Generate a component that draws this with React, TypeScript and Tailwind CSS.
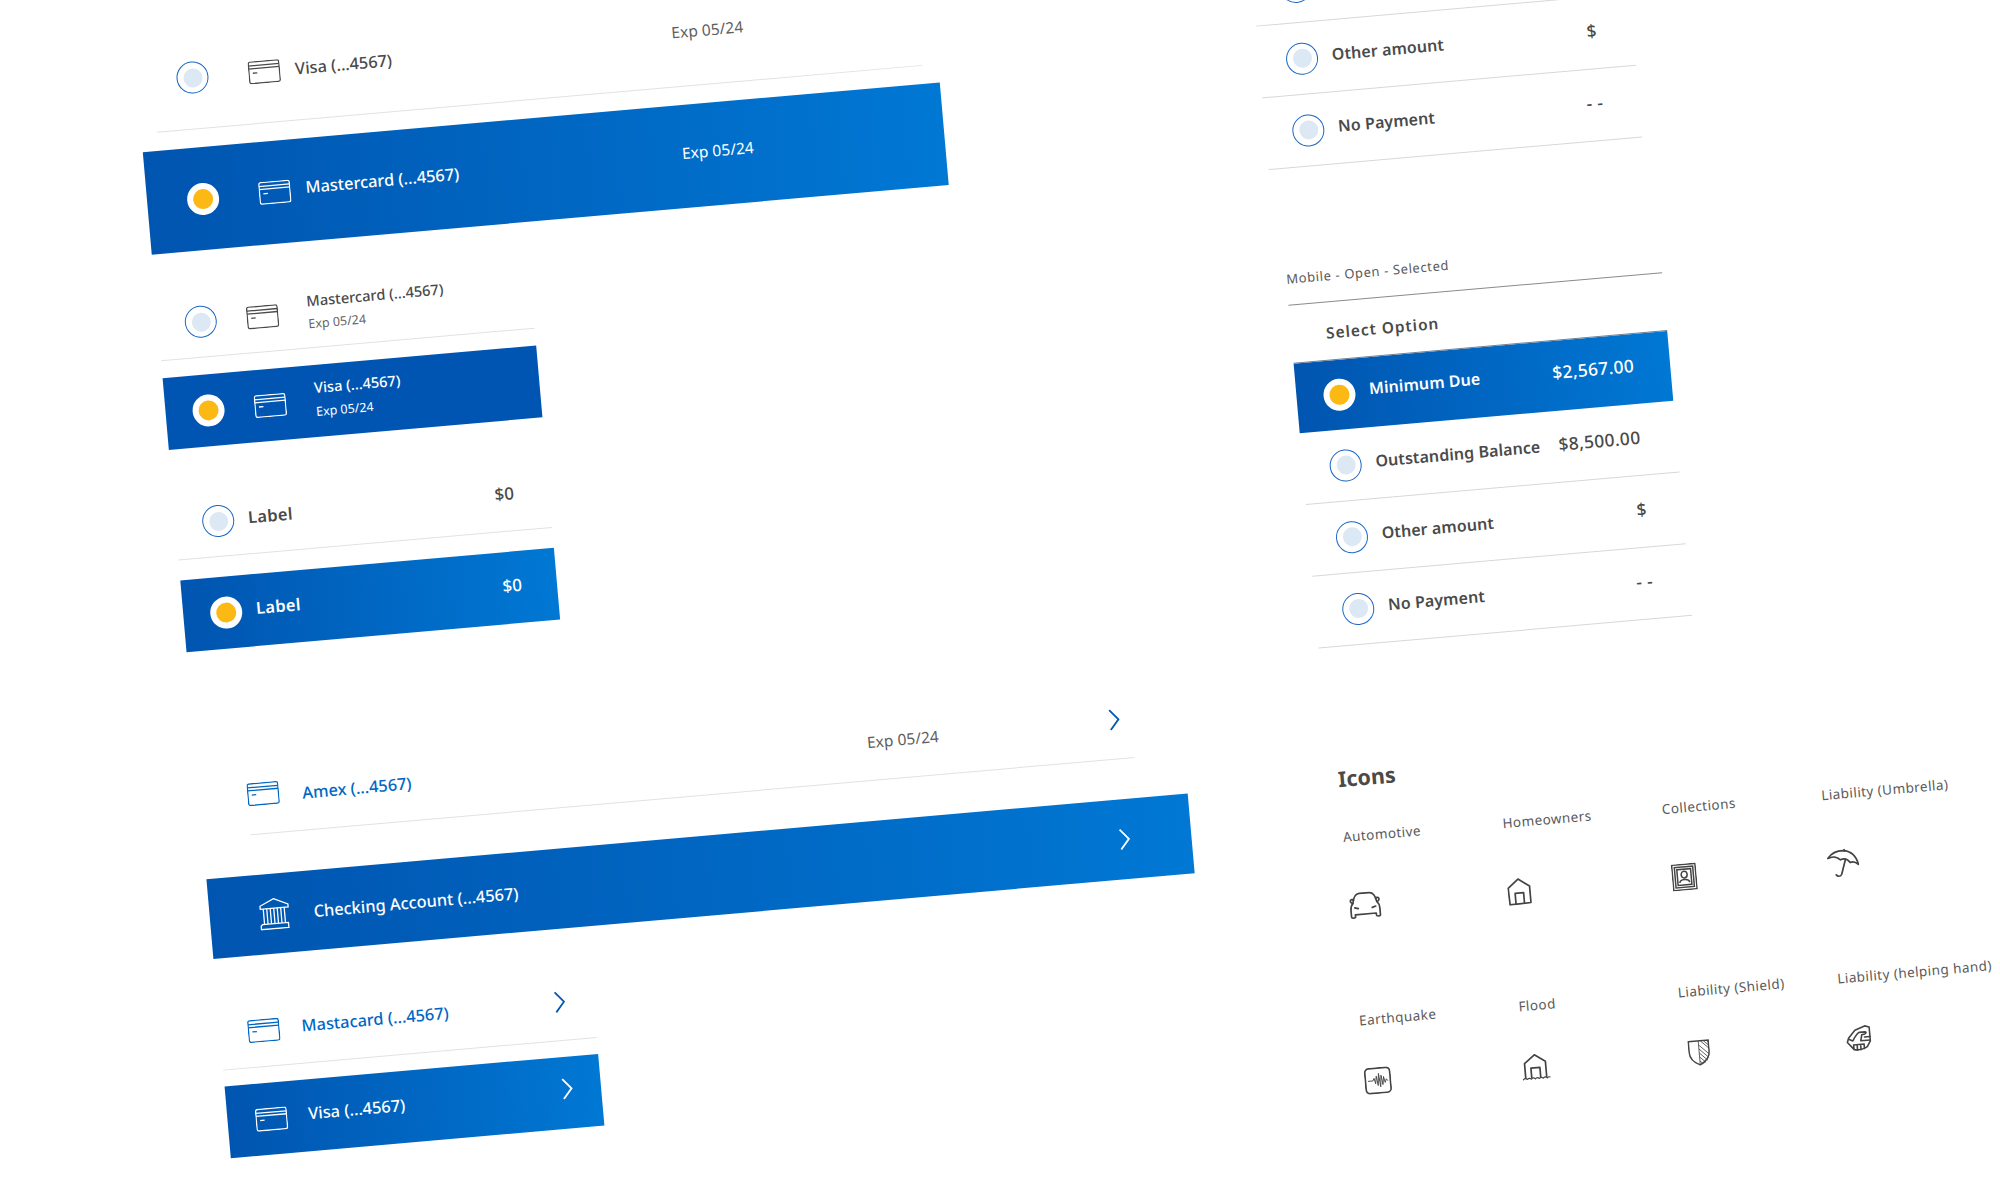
import React from "react";

const Card = ({ c = "#4a4a4a" }: { c?: string }) => (
  <svg width="32" height="23" viewBox="0 0 32 23" fill="none" stroke={c} strokeWidth="1.3" className="shrink-0">
    <rect x="0.7" y="0.7" width="30.6" height="21.6" rx="2" />
    <path d="M0.7 4.5H31.3M0.7 7.5H31.3M4.5 12H9" />
  </svg>
);

const Bank = () => (
  <svg width="34" height="32" viewBox="0 0 34 32" fill="none" stroke="#fff" strokeWidth="1.3" className="shrink-0">
    <path d="M17 1L31 7.5V10.5H3V7.5Z" />
    <path d="M6 10.5V26M9.5 10.5V26M13 10.5V26M16.5 10.5V26M20 10.5V26M23.5 10.5V26M27 10.5V26" />
    <path d="M4 26H30V31H2.5V27.5Z" />
  </svg>
);

const Chevron = ({ c, className = "" }: { c: string; className?: string }) => (
  <svg width="11" height="22" viewBox="0 0 11 22" fill="none" stroke={c} strokeWidth="1.8" className={"shrink-0 " + className}>
    <path d="M1 1L9.5 11L1 21" />
  </svg>
);

const Radio = ({ on }: { on?: boolean }) =>
  on ? (
    <span className="flex h-8 w-8 shrink-0 items-center justify-center rounded-full bg-white">
      <span className="h-5 w-5 rounded-full bg-[#fdb913]" />
    </span>
  ) : (
    <span className="flex h-8 w-8 shrink-0 items-center justify-center rounded-full border border-[#1a66c4]">
      <span className="h-[19px] w-[19px] rounded-full bg-[#dde8f5]" />
    </span>
  );

const grad = "bg-linear-to-r from-[#0055b0] to-[#0078d4]";

const OptionRow = ({ label, value, valueClass = "" }: { label: string; value: string; valueClass?: string }) => (
  <div className="flex h-[72px] w-[375px] items-center border-b border-[#d8d8d8] pr-[36px] pl-[27px] text-[#4a4a4a]">
    <Radio />
    <span className="ml-[14px] -translate-y-[2px] text-[16px] font-semibold tracking-[0.1px]">{label}</span>
    <span className={"ml-auto -translate-y-[2px] text-[17.5px] font-medium tracking-[0.3px] " + valueClass}>{value}</span>
  </div>
);

const IconCell = ({ label, gap, children }: { label: string; gap: string; children: React.ReactNode }) => (
  <div className="flex flex-col items-start">
    <span className="whitespace-nowrap text-[13.5px] leading-6 tracking-[0.45px] text-[#5a5a5a]">{label}</span>
    <div className={"flex h-8 w-8 items-center justify-center " + gap}>{children}</div>
  </div>
);

const ico = { fill: "none", stroke: "#444", strokeWidth: 1.7, strokeLinejoin: "round" as const, strokeLinecap: "round" as const };

export default function App() {
  return (
    <div className="relative h-[1200px] w-[2000px] overflow-hidden bg-white font-['Noto_Sans','Open_Sans',sans-serif]">
      <div className="flex w-[2400px] origin-top-left rotate-[-5deg] pl-[129px]">
        {/* left column */}
        <div className="flex w-[1120px] shrink-0 flex-col items-start pt-[43px]">
          <div className="ml-4 flex h-[103px] w-[768px] items-center border-b border-[#e2e2e2] pr-[175px] pl-[24px] text-[#4a4a4a]">
            <Radio />
            <span className="ml-[40px]"><Card /></span>
            <span className="ml-[15px] text-[16.4px] font-medium">Visa (...4567)</span>
            <span className="ml-auto -translate-y-[2px] text-[15.6px] text-[#5f5f5f]">Exp 05/24</span>
          </div>
          <div className={"mt-[18px] flex h-[103px] w-[800px] items-center pr-[191px] pl-[40px] text-white " + grad}>
            <Radio on />
            <span className="ml-[40px]"><Card c="#fff" /></span>
            <span className="ml-[15px] -translate-y-[2px] text-[16.4px] font-medium">Mastercard (...4567)</span>
            <span className="ml-auto -translate-y-[3px] text-[15.6px]">Exp 05/24</span>
          </div>

          <div className="mt-[36px] flex h-[71px] w-[375px] items-center border-b border-[#e2e2e2] pl-[27px] text-[#4a4a4a]">
            <Radio />
            <span className="ml-[30px]"><Card /></span>
            <div className="ml-[29px] flex flex-col">
              <span className="-translate-y-[2px] text-[14.6px] leading-5 font-medium">Mastercard (...4567)</span>
              <span className="mt-1 text-[12.5px] leading-4 text-[#666]">Exp 05/24</span>
            </div>
          </div>
          <div className="mt-[17px] flex h-[72px] w-[375px] items-center bg-[#0055b3] pl-[27px] text-white">
            <Radio on />
            <span className="ml-[30px]"><Card c="#fff" /></span>
            <div className="ml-[29px] flex -translate-y-px flex-col">
              <span className="-translate-y-[3px] text-[14.6px] leading-5 font-medium">Visa (...4567)</span>
              <span className="mt-1 text-[12.5px] leading-4">Exp 05/24</span>
            </div>
          </div>

          <div className="mt-[40px] flex h-[71px] w-[375px] items-center border-b border-[#e2e2e2] pr-[35px] pl-[27px] text-[#4a4a4a]">
            <Radio />
            <span className="ml-[14px] -translate-y-px text-[16.5px] font-semibold tracking-[0.3px]">Label</span>
            <span className="ml-auto -translate-y-[2px] text-[17px] font-medium">$0</span>
          </div>
          <div className={"mt-[20px] flex h-[72px] w-[375px] items-center pr-[35px] pl-[27px] text-white " + grad}>
            <Radio on />
            <span className="ml-[14px] -translate-y-[2px] text-[16.5px] font-semibold tracking-[0.3px]">Label</span>
            <span className="ml-auto -translate-y-[2px] text-[17px] font-medium">$0</span>
          </div>

          <div className="mt-[108px] ml-[48px] flex h-[80px] w-[887px] items-center border-b border-[#e2e2e2] pr-[11px]">
            <Card c="#0067c0" />
            <span className="ml-[23px] translate-y-[3px] text-[16.4px] font-medium text-[#0067c5]">Amex (...4567)</span>
            <span className="ml-auto translate-y-[2px] text-[15.6px] text-[#5f5f5f]">Exp 05/24</span>
            <span className="ml-[171px]"><Chevron c="#0058b0" /></span>
          </div>
          <div className={"mt-[40px] flex h-[80px] w-[985px] items-center pr-[61px] pl-[48px] text-white " + grad}>
            <Bank />
            <span className="ml-[22px] translate-y-px text-[16.4px] font-medium">Checking Account (...4567)</span>
            <span className="ml-auto"><Chevron c="#fff" /></span>
          </div>

          <div className="mt-[40px] flex h-[72px] w-[375px] items-center border-b border-[#e2e2e2] pr-[28px] pl-[28px]">
            <Card c="#0067c0" />
            <span className="ml-[22px] -translate-y-px text-[16.4px] font-medium text-[#0067c5]">Mastacard (...4567)</span>
            <span className="ml-auto -translate-y-[3px]"><Chevron c="#0058b0" /></span>
          </div>
          <div className={"mt-[16px] flex h-[72px] w-[375px] items-center pr-[28px] pl-[28px] text-white " + grad}>
            <Card c="#fff" />
            <span className="ml-[21px] -translate-y-[2px] text-[16.4px] font-medium">Visa (...4567)</span>
            <span className="ml-auto -translate-y-[4px]"><Chevron c="#fff" /></span>
          </div>
        </div>

        {/* right column */}
        <div className="flex flex-col items-start pt-[64px]">
          <OptionRow label="Outstanding Balance" value="$8,500.00" />
          <OptionRow label="Other amount" value="$" />
          <OptionRow label="No Payment" value="- -" />

          <div className="mt-[96px] ml-[8px] h-[41px] w-[375px] border-b border-[#8a8a8a] text-[13px] leading-7 tracking-[0.62px] text-[#5a5a5a]">
            Mobile - Open - Selected
          </div>
          <div className="ml-[8px] h-[57px] w-[375px] pt-[16px] pl-[35px] text-[15.5px] leading-7 font-semibold tracking-[0.95px] text-[#4a4a4a]">
            Select Option
          </div>
          <div className="ml-[8px] flex flex-col">
            <div className="flex h-[71px] w-[375px] items-center border-t border-[#6f8199] bg-linear-to-r from-[#0055b0] to-[#0078d4] pr-[36px] pl-[27px] text-white">
              <Radio on />
              <span className="ml-[14px] -translate-y-[4px] text-[16px] font-semibold tracking-[0.1px]">Minimum Due</span>
              <span className="ml-auto -translate-y-[4px] text-[17.5px] font-medium tracking-[0.3px]">$2,567.00</span>
            </div>
            <OptionRow label="Outstanding Balance" value="$8,500.00" />
            <OptionRow label="Other amount" value="$" />
            <OptionRow label="No Payment" value="- -" />
          </div>

          <div className="mt-[116px] ml-[16px] flex flex-col">
            <h2 className="text-[21.5px] leading-8 font-bold text-[#4a4a4a]">Icons</h2>
            <div className="mt-[30px] grid grid-cols-[160px_160px_160px_160px]">
              <IconCell label="Automotive" gap="mt-[41px]">
                <svg width="32" height="27" viewBox="0 0 32 27" {...ico}>
                  <path d="M4 11C5 5 7 1.5 11 1.5H21C25 1.5 27 5 28 11C30 13 30.5 15 30.5 18V24.5C30.5 26 26.5 26 26.5 24.5V22.5H5.5V24.5C5.5 26 1.5 26 1.5 24.5V18C1.5 15 2 13 4 11Z" />
                  <path d="M4 11C2 10.5 1 9 2 7.5C3 6.5 4.5 7 5 8M28 11C30 10.5 31 9 30 7.5C29 6.5 27.5 7 27 8M5.5 15.5L9 16.5M26.5 15.5L23 16.5" />
                </svg>
              </IconCell>
              <IconCell label="Homeowners" gap="mt-[41px] -ml-[5px]">
                <svg width="24" height="27" viewBox="0 0 24 27" {...ico}>
                  <path d="M1 9.5L11.5 1L22.5 9V25.5L1.5 26Z" />
                  <path d="M7.5 25.5V15H16V25.5" />
                </svg>
              </IconCell>
              <IconCell label="Collections" gap="mt-[41px]">
                <svg width="25" height="27" viewBox="0 0 25 27" fill="none" stroke="#444" strokeWidth="1.5">
                  <rect x="0.8" y="0.8" width="23.4" height="25.4" />
                  <rect x="3.3" y="3.3" width="18.4" height="20.4" />
                  <rect x="5.6" y="5.6" width="13.8" height="15.8" />
                  <ellipse cx="12.5" cy="11" rx="3" ry="3.4" />
                  <path d="M7.5 19C8 16 10.5 16 12.5 16C14.5 16 17 16 17.5 19" />
                </svg>
              </IconCell>
              <IconCell label="Liability (Umbrella)" gap="mt-[41px]">
                <svg width="32" height="29" viewBox="0 0 32 29" {...ico}>
                  <path d="M1 8.5C5 3.5 11 1.5 17 2C24 3 29.5 8 31 17C28 14 25.5 13.5 23 14.5C20.5 10.5 17 9.5 13.5 11C10.5 7.5 5.5 6.5 1 8.5Z" />
                  <path d="M18 1L18.5 2.5M18.5 11L13.5 25.5C12.5 28 9 27.5 8 25.5" />
                </svg>
              </IconCell>
            </div>
            <div className="mt-[87px] grid grid-cols-[160px_160px_160px_160px]">
              <IconCell label="Earthquake" gap="mt-[33px] -ml-[3px]">
                <svg width="27" height="27" viewBox="0 0 27 27" fill="none" stroke="#444">
                  <rect x="1" y="1" width="25" height="25" rx="4" strokeWidth="1.7" />
                  <path d="M3.5 13.5H8.5L9.8 11L11 16.5L12.2 9L13.4 18.5L14.6 6.5L15.8 20L17 8.5L18.2 18L19.4 10L20.6 16L22 12.5L23.5 14.5" strokeWidth="0.9" />
                </svg>
              </IconCell>
              <IconCell label="Flood" gap="mt-[33px] -ml-[4px]">
                <svg width="28" height="27" viewBox="0 0 28 27" {...ico}>
                  <path d="M3 24V9.5L13.5 1.5L24 9V24" />
                  <path d="M9 24V14.5H18V24" />
                  <path d="M0.5 25.5C2 24 3 24 4.5 25.5C6 24 7 24 8.5 25.5C10 24 11 24 12.5 25.5C14 24 15 24 16.5 25.5C18 24 19 24 20.5 25.5C22 24 23 24 24.5 25.5C25.5 24.5 26.5 24.5 27.5 25" strokeWidth="1.2" />
                </svg>
              </IconCell>
              <IconCell label="Liability (Shield)" gap="mt-[33px]">
                <svg width="22" height="27" viewBox="0 0 22 27" fill="none" stroke="#444" strokeWidth="1.5">
                  <path d="M1 2H21V13C21 19 16.5 23.5 11 26C5.5 23.5 1 19 1 13Z" />
                  <path d="M11 2V26M13 2L21 10M11 6L21 16M11 10L20.5 19.5M11 14L19 22M11 18L17 24M11 22L14 25M16 2L21 7M19 2L21 4" strokeWidth="0.8" />
                </svg>
              </IconCell>
              <IconCell label="Liability (helping hand)" gap="mt-[33px]">
                <svg width="26" height="26" viewBox="0 0 26 26" {...ico} strokeWidth="1.6">
                  <path d="M10 5L20 1.5L24.5 3V17L21 22.5C17 25 11 25.5 7.5 24L1.5 16.5L3 12.5Z" />
                  <path d="M3 13.5L7 15.5C9 12.5 11 9 14 7.5L20 7.5C21.5 7.5 21 9 19.5 9.5L16.5 10L15 16H24.5M19 12.5L24.5 12.5M7.5 24V19.5M11 25V20M14.5 25V20M18 24V19.5L7.5 19.5" />
                </svg>
              </IconCell>
            </div>
          </div>
        </div>
      </div>
    </div>
  );
}
